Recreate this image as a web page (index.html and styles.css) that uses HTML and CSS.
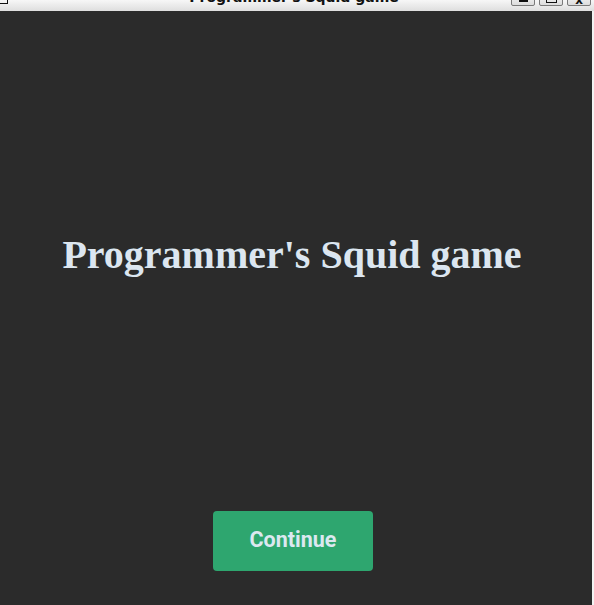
FILE: index.html
```html
<!DOCTYPE html>
<html>
<head>
<meta charset="utf-8">
<link rel="stylesheet" href="styles.css">
</head>
<body>
<div class="window">
  <div class="titlebar">
    <span class="app-icon"></span>
    <span class="title">Programmer's Squid game</span>
    <div class="controls">
      <span class="ctl"><span class="min"></span></span>
      <span class="ctl"><span class="max"></span></span>
      <span class="ctl close">x</span>
    </div>
  </div>
  <main class="app">
    <h1 class="heading">Programmer's Squid game</h1>
    <button class="continue">Continue</button>
  </main>
</div>
</body>
</html>
```
FILE: styles.css
```css
html, body {
  margin: 0;
  padding: 0;
  width: 594px;
  height: 605px;
  overflow: hidden;
  background: #f2f2f2;
}
.window {
  display: flex;
  flex-direction: column;
  width: 594px;
  height: 605px;
}
.titlebar {
  position: relative;
  height: 11px;
  flex: none;
  background: linear-gradient(#f7f7f7, #dedede);
  overflow: hidden;
  display: flex;
  justify-content: center;
}
.app-icon {
  position: absolute;
  left: -2px;
  top: -6px;
  width: 8px;
  height: 8px;
  border: 1px solid #111;
}
.title {
  font-family: "DejaVu Sans", sans-serif;
  font-weight: bold;
  font-size: 14px;
  line-height: 14px;
  color: #111;
  margin-top: -10px;
  margin-right: 6px;
}
.controls {
  position: absolute;
  right: 3px;
  top: -8px;
  display: flex;
  gap: 4px;
}
.ctl {
  width: 24px;
  height: 14px;
  border: 1px solid #7a7a7a;
  border-radius: 2px;
  background: linear-gradient(#fafafa, #dcdcdc);
  display: flex;
  align-items: flex-end;
  justify-content: center;
  box-sizing: border-box;
  font-family: "DejaVu Sans", sans-serif;
  font-weight: bold;
  font-size: 12px;
  line-height: 12px;
  color: #111;
}
.min {
  width: 9px;
  height: 2px;
  background: #111;
  margin-bottom: 3px;
}
.max {
  width: 11px;
  height: 9px;
  border: 1px solid #111;
  margin-bottom: 2px;
  box-sizing: border-box;
}
.close {
  line-height: 10px;
}
.app {
  flex: 1;
  width: 592px;
  background: #2b2b2b;
  display: flex;
  flex-direction: column;
  align-items: center;
  padding: 221px 8px 34px 0;
  box-sizing: border-box;
}
.heading {
  margin: 0;
  font-family: "Liberation Serif", "Times New Roman", serif;
  font-weight: bold;
  font-size: 40px;
  line-height: 46px;
  color: #dce6f0;
}
.continue {
  margin-top: auto;
  margin-left: 2px;
  width: 160px;
  height: 60px;
  border: none;
  border-radius: 4px;
  background: #2ea66f;
  color: #dce8f0;
  font-family: Roboto, sans-serif;
  font-weight: bold;
  font-size: 21.5px;
  padding: 0 0 4px;
}
```
